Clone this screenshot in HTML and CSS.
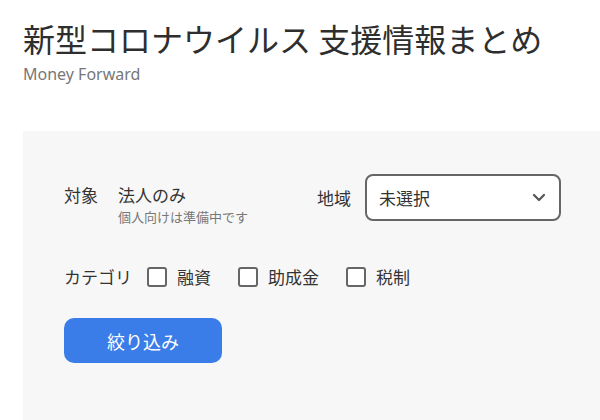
FILE: index.html
```html
<!DOCTYPE html>
<html lang="ja">
<head>
<meta charset="utf-8">
<link rel="stylesheet" href="styles.css">
</head>
<body>
<header class="header">
  <h1 class="title">新型コロナウイルス 支援情報まとめ</h1>
  <p class="brand">Money Forward</p>
</header>
<section class="panel">
  <div class="row row-top">
    <div class="field field-target">
      <span class="label">対象</span>
      <div class="value">
        <span class="value-main">法人のみ</span>
        <span class="value-note">個人向けは準備中です</span>
      </div>
    </div>
    <div class="field field-area">
      <span class="label">地域</span>
      <div class="select">
        <span class="select-text">未選択</span>
        <svg class="chevron" width="14" height="9" viewBox="0 0 14 9"><path d="M2 2 L7 7 L12 2" fill="none" stroke="#555" stroke-width="2.2" stroke-linecap="round" stroke-linejoin="round"/></svg>
      </div>
    </div>
  </div>
  <div class="row row-cat">
    <span class="label">カテゴリ</span>
    <label class="check"><span class="box"></span><span class="check-text">融資</span></label>
    <label class="check"><span class="box"></span><span class="check-text">助成金</span></label>
    <label class="check"><span class="box"></span><span class="check-text">税制</span></label>
  </div>
  <button class="submit">絞り込み</button>
</section>
</body>
</html>
```
FILE: styles.css
```css
html, body {
  margin: 0;
  padding: 0;
  background: #ffffff;
}
body {
  font-family: "Noto Sans CJK JP", "Noto Sans", sans-serif;
  color: #333;
  width: 600px;
  height: 420px;
  overflow: hidden;
}
.header {
  padding: 16px 0 0 23px;
}
.title {
  margin: 0;
  font-size: 32px;
  font-weight: 400;
  line-height: 44px;
  color: #2e2e2e;
}
.brand {
  margin: 4px 0 0 0;
  font-family: "Noto Sans", "Noto Sans CJK JP", sans-serif;
  font-size: 16px;
  line-height: 20px;
  color: #777;
}
.panel {
  margin: 47px 0 0 23px;
  background: #f7f7f7;
  padding: 43px 0 0 41px;
  height: 289px;
  box-sizing: border-box;
}
.row {
  display: flex;
}
.row-top {
  align-items: flex-start;
}
.field {
  display: flex;
}
.field-target {
  width: 253px;
  padding-top: 9px;
}
.label {
  font-size: 17px;
  line-height: 24px;
  color: #333;
}
.field-target .label {
  width: 54px;
}
.value {
  display: flex;
  flex-direction: column;
}
.value-main {
  font-size: 17px;
  line-height: 24px;
}
.value-note {
  font-size: 13px;
  line-height: 18px;
  color: #777;
  margin-top: 1px;
}
.field-area {
  align-items: center;
}
.field-area .label {
  width: 48px;
}
.select {
  box-sizing: content-box;
  width: 167px;
  height: 43px;
  border: 2px solid #666;
  border-radius: 8px;
  background: #fff;
  display: flex;
  align-items: center;
  justify-content: space-between;
  padding: 0 13px 0 12px;
}
.select-text {
  font-size: 17px;
  color: #333;
}
.chevron {
  display: block;
}
.row-cat {
  margin-top: 39px;
  align-items: center;
}
.check {
  display: flex;
  align-items: center;
  margin-left: 15px;
}
.check + .check {
  margin-left: 27px;
}
.box {
  width: 16px;
  height: 16px;
  border: 2px solid #666;
  border-radius: 3px;
  background: #fff;
}
.check-text {
  margin-left: 10px;
  font-size: 17px;
  line-height: 24px;
  color: #333;
}
.submit {
  display: block;
  margin-top: 29px;
  width: 158px;
  height: 45px;
  border: none;
  border-radius: 10px;
  background: #3a7de8;
  color: #fff;
  font-family: "Noto Sans CJK JP", sans-serif;
  font-size: 18px;
  padding: 0;
}
```
